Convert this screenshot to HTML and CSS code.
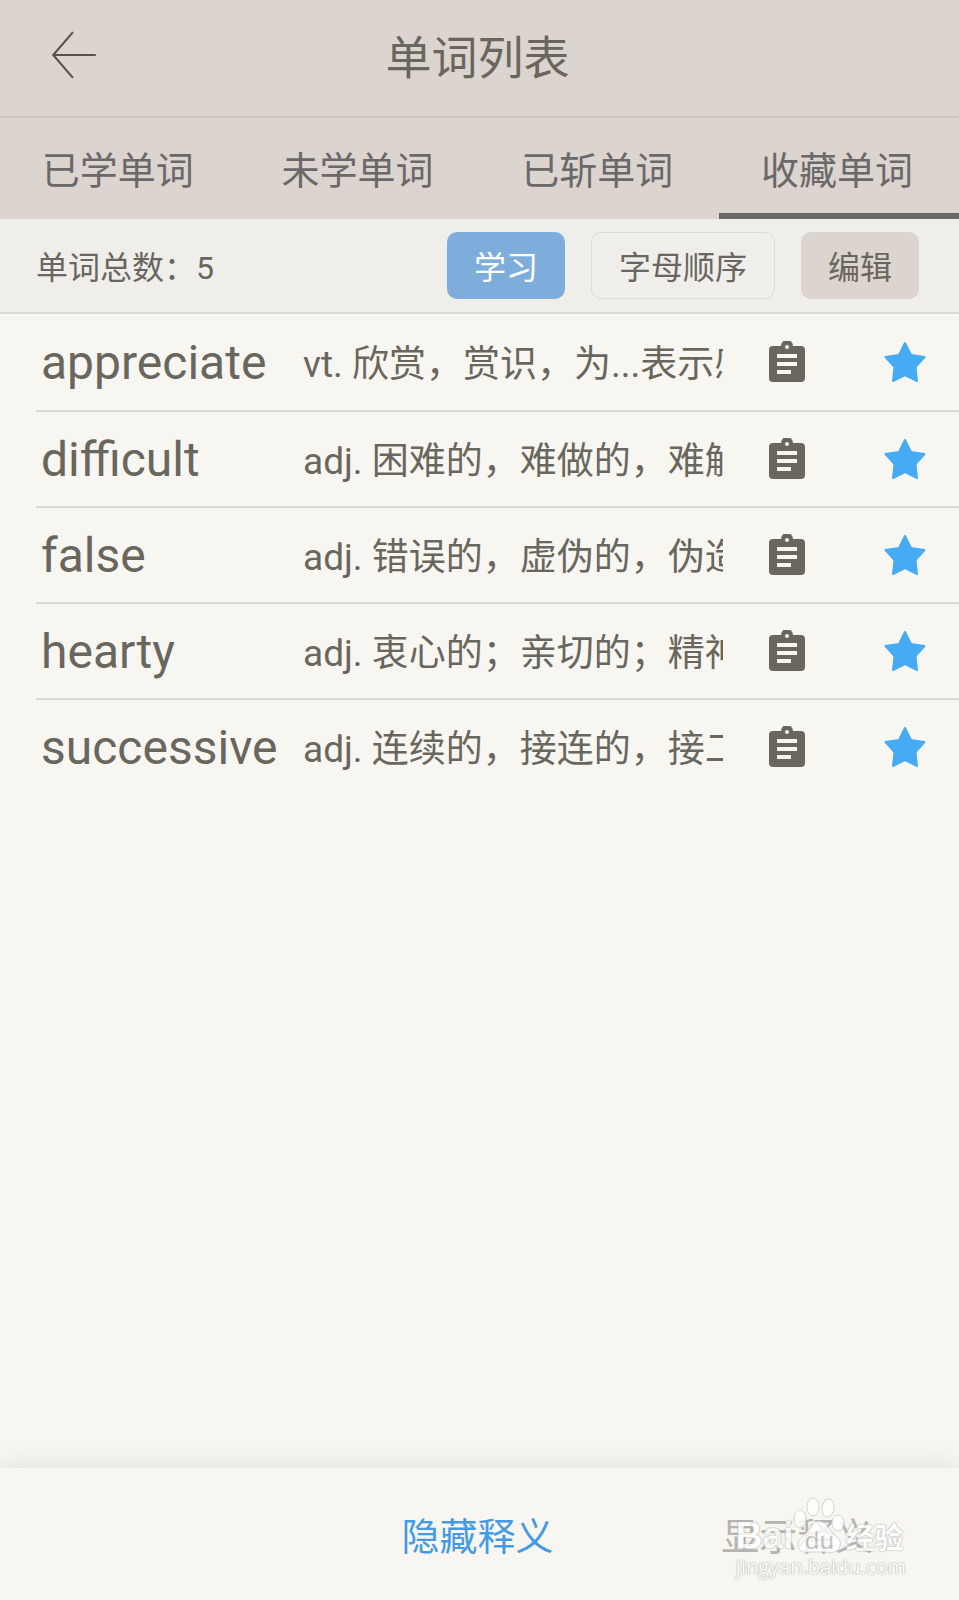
FILE: index.html
```
<!DOCTYPE html>
<html lang="zh-CN">
<head>
    <meta charset="UTF-8">
    <meta name="viewport" content="width=device-width, initial-scale=1.0">
    <title>单词列表</title>
    <link rel="stylesheet" href="styles.css">
</head>
<body>

<!-- Shared icons -->
<svg class="sprite" aria-hidden="true">
    <symbol id="icon-note" viewBox="0 0 38 42">
        <path fill-rule="evenodd" d="M5 5H13A6 6 0 0 1 25 5H33A4 4 0 0 1 37 9V37A4 4 0 0 1 33 41H5A4 4 0 0 1 1 37V9A4 4 0 0 1 5 5ZM19 4A2 2 0 1 0 19 8A2 2 0 1 0 19 4ZM9 13V17H29V13ZM9 21V25H29V21ZM9 29V33H23V29Z"/>
    </symbol>
    <symbol id="icon-star" viewBox="0 0 42 42">
        <path stroke-width="2" stroke-linejoin="round" d="M21 2L27 14L40.500 16L31.500 26L33 40L21 34L9 40L10.500 26L1.500 16L15 14Z"/>
    </symbol>
</svg>

<header class="header">
    <button class="back" type="button" aria-label="返回">
        <svg viewBox="0 0 46 50"><path d="M22 2L3 24L22 46M3 24H44"/></svg>
    </button>
    <h1>单词列表</h1>
</header>

<nav class="tabs">
    <a href="#learned">已学单词</a>
    <a href="#unlearned">未学单词</a>
    <a href="#cut">已斩单词</a>
    <a href="#favorites" class="active">收藏单词</a>
</nav>

<div class="toolbar">
    <span class="count">单词总数：5</span>
    <button class="btn btn-study" type="button">学习</button>
    <button class="btn btn-sort" type="button">字母顺序</button>
    <button class="btn btn-edit" type="button">编辑</button>
</div>

<main>
    <ul class="words">
        <li>
            <span class="word">appreciate</span>
            <span class="meaning">vt. 欣赏，赏识，为...表示感激</span>
            <button class="note" type="button" aria-label="笔记"><svg><use href="#icon-note"/></svg></button>
            <button class="star" type="button" aria-label="取消收藏"><svg><use href="#icon-star"/></svg></button>
        </li>
        <li>
            <span class="word">difficult</span>
            <span class="meaning">adj. 困难的，难做的，难解的</span>
            <button class="note" type="button" aria-label="笔记"><svg><use href="#icon-note"/></svg></button>
            <button class="star" type="button" aria-label="取消收藏"><svg><use href="#icon-star"/></svg></button>
        </li>
        <li>
            <span class="word">false</span>
            <span class="meaning">adj. 错误的，虚伪的，伪造的</span>
            <button class="note" type="button" aria-label="笔记"><svg><use href="#icon-note"/></svg></button>
            <button class="star" type="button" aria-label="取消收藏"><svg><use href="#icon-star"/></svg></button>
        </li>
        <li>
            <span class="word">hearty</span>
            <span class="meaning">adj. 衷心的；亲切的；精神饱满的</span>
            <button class="note" type="button" aria-label="笔记"><svg><use href="#icon-note"/></svg></button>
            <button class="star" type="button" aria-label="取消收藏"><svg><use href="#icon-star"/></svg></button>
        </li>
        <li>
            <span class="word">successive</span>
            <span class="meaning">adj. 连续的，接连的，接二连三的</span>
            <button class="note" type="button" aria-label="笔记"><svg><use href="#icon-note"/></svg></button>
            <button class="star" type="button" aria-label="取消收藏"><svg><use href="#icon-star"/></svg></button>
        </li>
    </ul>
</main>

<footer class="footer">
    <button class="hide-meaning" type="button">隐藏释义</button>
    <button class="show-meaning" type="button">显示释义</button>
    <div class="watermark">
        <div class="brand">
            <span class="bai">Bai</span>
            <span class="paw">
                <svg viewBox="0 0 52 58">
                    <ellipse cx="7" cy="22" rx="6" ry="9"/>
                    <ellipse cx="20" cy="10" rx="6" ry="9"/>
                    <ellipse cx="35" cy="11" rx="6" ry="9" transform="rotate(8 35 11)"/>
                    <ellipse cx="45" cy="26" rx="6" ry="8"/>
                    <path d="M25 24C32 24 35 30 39 35C44 40 49 43 47 49C45 56 38 56 33 55H17C11 56 5 55 5 48C5 42 11 39 15 34C18 29 20 24 25 24Z"/>
                </svg>
                <span class="du">du</span>
            </span>
            <span class="jingyan">经验</span>
        </div>
        <div class="site">jingyan.baidu.com</div>
    </div>
</footer>

</body>
</html>
```
FILE: styles.css
```
* {
    box-sizing: border-box;
}
body {
    display: flex;
    flex-direction: column;
    min-height: 100vh;
    margin: 0;
    background: #f7f6f1;
    color: #69665d;
    font-family: Roboto, "Noto Sans CJK SC", sans-serif;
}
button {
    padding: 0;
    border: none;
    background: none;
    color: inherit;
    font-family: inherit;
    cursor: pointer;
}
svg {
    display: block;
}
.sprite {
    position: absolute;
    width: 0;
    height: 0;
}

/* Header */
.header {
    display: grid;
    grid-template-columns: 98px 1fr 102px;
    align-items: center;
    height: 118px;
    border-bottom: 2px solid #cec6c0;
    background: #dcd4ce;
}
.back {
    justify-self: end;
    padding-bottom: 4px;
}
.back svg {
    width: 48px;
    height: 52px;
    fill: none;
    stroke: #5d514b;
    stroke-width: 2;
}
h1 {
    margin: 0;
    font-size: 46px;
    font-weight: 400;
    line-height: 60px;
    text-align: center;
}

/* Tabs */
.tabs {
    display: grid;
    grid-template-columns: repeat(4, 1fr);
    background: #dcd4ce;
}
.tabs a {
    height: 101px;
    padding-right: 4px;
    border-bottom: 6px solid transparent;
    color: #6a6868;
    font-size: 38px;
    line-height: 106px;
    text-align: center;
    text-decoration: none;
}
.tabs .active {
    border-color: #6a6868;
}

/* Toolbar */
.toolbar {
    display: flex;
    align-items: center;
    gap: 26px;
    height: 95px;
    padding: 0 40px 0 36px;
    border-bottom: 2px solid #dbdad6;
    background: #efeeea;
    font-size: 32px;
}
.count {
    margin-right: auto;
    padding-bottom: 2px;
}
.btn {
    height: 67px;
    padding: 0 27px 2px;
    border-radius: 10px;
    font-size: 32px;
}
.btn-study {
    background: #7eaddc;
    color: #fff;
}
.btn-sort {
    border: 1px solid #dbdad6;
}
.btn-edit {
    background: #dcd4ce;
}

/* Word list */
main {
    flex: 1;
}
.words {
    margin: 0;
    padding: 0 0 0 36px;
    list-style: none;
}
.words li {
    display: grid;
    grid-template-columns: 262px 1fr 128px 108px;
    align-items: center;
    height: 96px;
    padding-left: 5px;
}
.words li + li {
    border-top: 2px solid #dbdad6;
}
.word {
    font-size: 48px;
}
.meaning {
    overflow: hidden;
    padding-top: 6px;
    font-size: 37px;
    line-height: 60px;
    white-space: nowrap;
}
.note,
.star {
    justify-self: center;
}
.note svg {
    width: 38px;
    height: 42px;
    fill: #69665d;
}
.star svg {
    width: 42px;
    height: 42px;
    fill: #45acf3;
    stroke: #45acf3;
}

/* Footer */
.footer {
    position: relative;
    display: grid;
    grid-template-columns: repeat(3, 1fr);
    height: 132px;
    box-shadow: 0 -2px 24px rgba(105, 102, 93, 0.15);
    background: #f7f6f1;
}
.footer button {
    padding: 0 4px 2px 0;
    font-size: 38px;
}
.hide-meaning {
    grid-column: 2;
    color: #459be3;
}
.show-meaning {
    grid-column: 3;
    color: #b5b4b0;
}

/* Watermark over the footer */
.watermark {
    position: absolute;
    right: 53px;
    bottom: 21px;
    color: #fff;
    font-family: "Open Sans", "Noto Sans CJK SC", sans-serif;
    text-shadow: 0 0 1px #999, 0 0 2px #aaa;
    opacity: 0.8;
    pointer-events: none;
}
.brand {
    display: flex;
    align-items: flex-end;
    height: 58px;
}
.bai {
    font-family: "Liberation Sans", sans-serif;
    font-size: 37px;
    font-weight: 700;
    line-height: 38px;
}
.paw {
    position: relative;
}
.paw svg {
    width: 52px;
    height: 58px;
    fill: #fff;
    stroke: #ccc;
}
.du {
    position: absolute;
    right: 0;
    bottom: 0;
    left: 0;
    color: #bbb;
    font-size: 24px;
    line-height: 30px;
    text-align: center;
    text-shadow: none;
}
.jingyan {
    font-size: 29px;
    font-weight: 700;
    line-height: 34px;
}
.site {
    font-size: 20px;
    line-height: 24px;
}
```
